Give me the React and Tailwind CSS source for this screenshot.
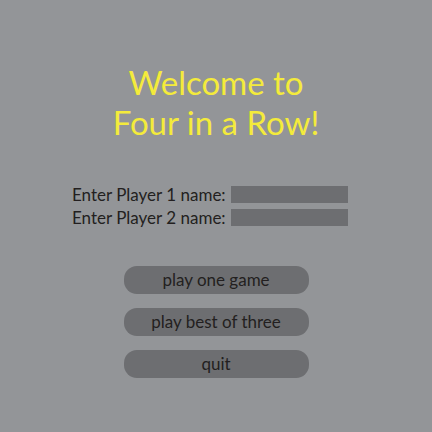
import { useState } from 'react';

const font = { fontFamily: 'Lato, "Open Sans", sans-serif' };

export default function App() {
  const [p1, setP1] = useState('');
  const [p2, setP2] = useState('');

  return (
    <div className="w-[432px] h-[432px] bg-[#939598] flex flex-col items-center pt-[62px]" style={font}>
      <h1 className="text-[33px] leading-[40px] text-[#f4eb3b] text-center">
        Welcome to
        <br />
        Four in a Row!
      </h1>

      <div className="mt-[44px] grid grid-cols-[152px_117px] gap-x-[7px] gap-y-[6px] items-center text-[17px] leading-[17px] text-[#231f20] -translate-x-[6px]">
        <label className="whitespace-nowrap">Enter Player 1 name:</label>
        <input
          value={p1}
          onChange={(e) => setP1(e.target.value)}
          className="h-[17px] bg-[#6d6e71] outline-none px-1"
        />
        <label className="whitespace-nowrap">Enter Player 2 name:</label>
        <input
          value={p2}
          onChange={(e) => setP2(e.target.value)}
          className="h-[17px] bg-[#6d6e71] outline-none px-1"
        />
      </div>

      <div className="mt-[40px] flex flex-col gap-[14px]">
        {['play one game', 'play best of three', 'quit'].map((label) => (
          <button
            key={label}
            className="w-[185px] h-[28px] rounded-[13px] bg-[#6d6e71] text-[17px] leading-[28px] text-[#231f20]"
          >
            {label}
          </button>
        ))}
      </div>
    </div>
  );
}
